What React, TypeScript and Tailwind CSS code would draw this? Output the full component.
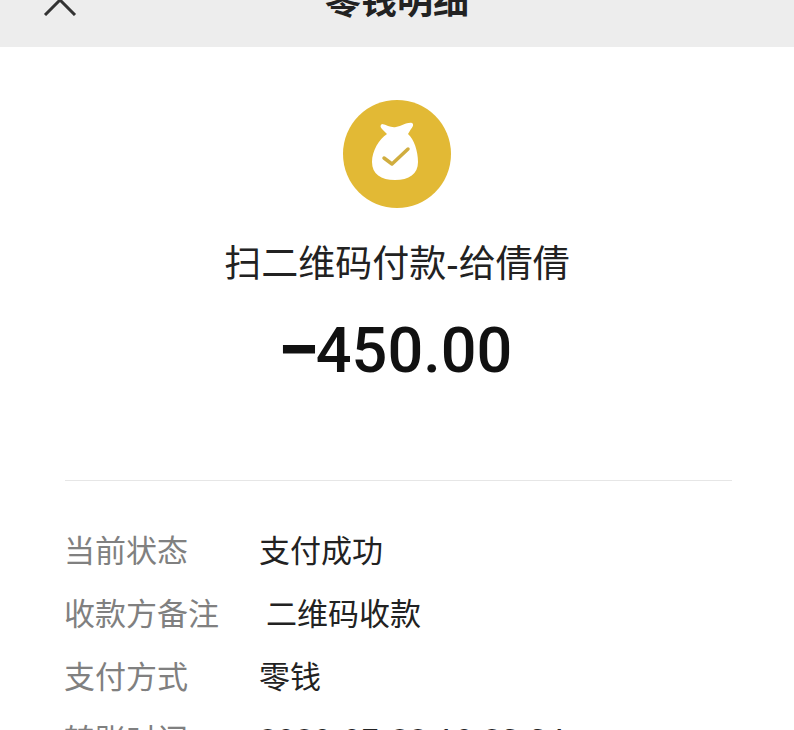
const rows = [
  { label: "当前状态", value: "支付成功", cls: "text-[#222]" },
  { label: "收款方备注", value: "二维码收款", cls: "pl-[7px] text-[#222]" },
  { label: "支付方式", value: "零钱", cls: "text-[#222]" },
  { label: "转账时间", value: "2020-07-22 10:23:34", cls: "tracking-[1px] text-[#222]" },
];

function BagIcon() {
  return (
    <svg viewBox="0 0 108 108" className="h-[108px] w-[108px]">
      <circle cx="54" cy="54" r="54" fill="#e2b935" />
      <path
        d="M39 24C44 25 48 28 53 27C59 26 64 22 69 23C71 24 70 27 68 29L65 34C71 39 75 51 75 62C75 74 66 80 52 80C38 80 29 74 29 62C29 51 36 39 44 34L39 29C37 27 37 25 39 24Z"
        fill="#fff"
      />
      <path
        d="M41 58l8 6 16-15"
        fill="none"
        stroke="#d0ad3f"
        strokeWidth="3.500"
        strokeLinecap="round"
        strokeLinejoin="round"
      />
    </svg>
  );
}

export default function App() {
  return (
    <div className="h-[730px] w-full overflow-hidden bg-white font-['Liberation_Sans','Noto_Sans_CJK_SC',sans-serif]">
      {/* Header */}
      <div className="relative flex h-[47px] items-end justify-center overflow-hidden bg-[#ededed]">
        <svg viewBox="0 0 34 20" className="absolute left-[43px] top-[-4px] h-[20px] w-[34px]">
          <path d="M2 19L17 4l15 15" fill="none" stroke="#333" strokeWidth="3" />
        </svg>
        <span className="mb-[23px] text-[36px] leading-[44px] font-bold text-[#222]">零钱明细</span>
      </div>

      {/* Summary */}
      <div className="flex flex-col items-center pt-[53px]">
        <BagIcon />
        <div className="mt-[33px] text-[37px] leading-[48px] text-[#222]">扫二维码付款-给倩倩</div>
        <div className="mt-[26px] mr-[4px] font-['Roboto',sans-serif] text-[63px] leading-[72px] font-medium text-[#111]">
          <span className="mr-[-4px] align-[-4px] text-[76px] leading-[0] font-bold">−</span>450.00
        </div>
      </div>

      {/* Details */}
      <div className="mt-[93px] mr-[62px] ml-[65px] border-t border-[#e6e6e6] pt-[47px]">
        {rows.map((row) => (
          <div key={row.label} className="-ml-[1px] flex h-[63px] items-start text-[31px] leading-[48px]">
            <span className="w-[195px] shrink-0 text-[#808080]">{row.label}</span>
            <span className={row.cls}>{row.value}</span>
          </div>
        ))}
      </div>
    </div>
  );
}
